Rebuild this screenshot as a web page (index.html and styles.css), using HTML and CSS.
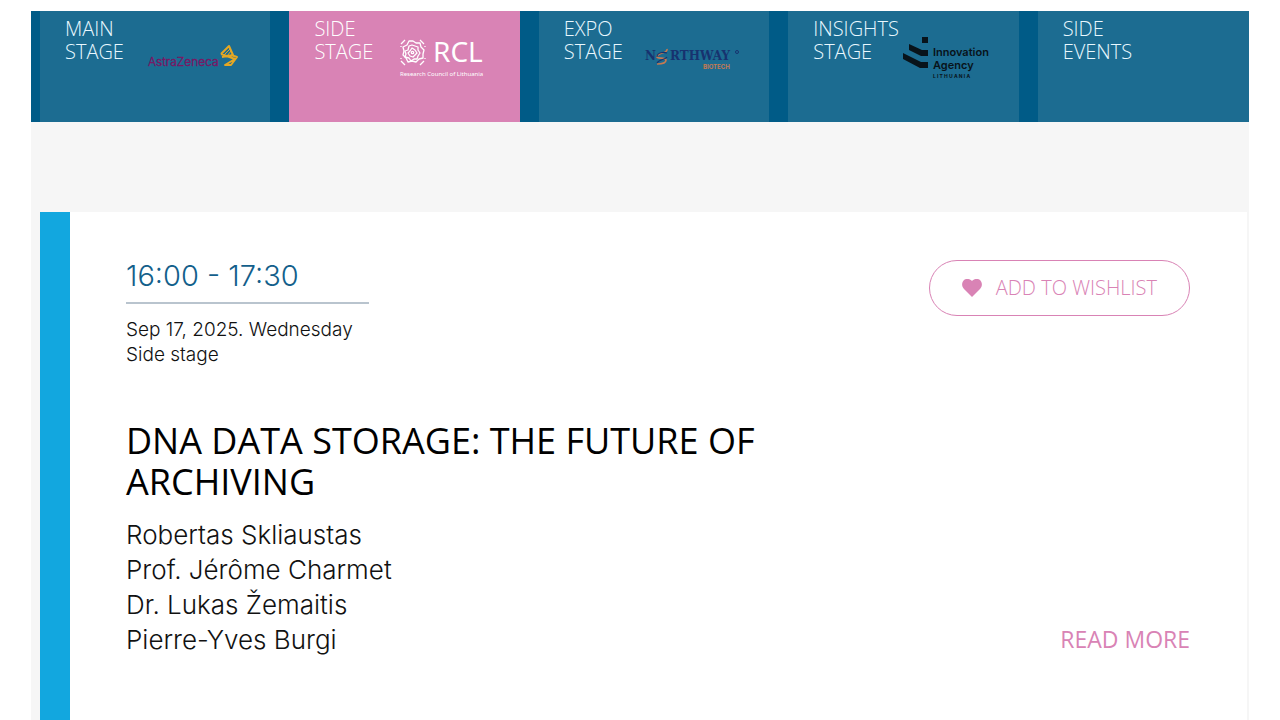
FILE: index.html
```html
<!DOCTYPE html>
<html lang="en">
<head>
<meta charset="utf-8">
<meta name="viewport" content="width=device-width, initial-scale=1">
<title>Programme – Side stage</title>
<link rel="stylesheet" href="styles.css">
</head>
<body>
<div class="page">
  <nav class="stages" aria-label="Stages">
    <a class="stage" href="#main"><span class="stage-name">Main<br>stage</span>
      <svg class="logo logo-az" width="92" height="26" viewBox="0 0 92 26" role="img" aria-label="AstraZeneca">
        <text x="0" y="22" font-size="12" fill="#7a1764" stroke="#7a1764" stroke-width=".4">AstraZeneca</text>
        <path d="M73 10 81 2l4 9-11 2M73 10l14 5-10 6h6l6-8-6-2" fill="none" stroke="#e5a823" stroke-width="2" stroke-linejoin="round"/>
        <path d="m76 11 6-6m-3 7 4-5" stroke="#e5a823" stroke-width="1"/>
      </svg>
    </a>
    <a class="stage stage-active" href="#side" aria-current="page"><span class="stage-name">Side<br>stage</span>
      <svg class="logo logo-rcl" width="90" height="42" viewBox="0 0 90 42" role="img" aria-label="Research Council of Lithuania">
        <g fill="none" stroke="#fff" stroke-width="1.3" stroke-linejoin="round">
          <path d="m13 2 3 2 4 0 1 4 3 3-1 4 0 4-4 1-3 3-4-1-4 1-2-4-3-3 1-4-1-4 4-2 2-4z"/>
          <path d="m12 6 3 1 3 1 0 3 2 3-2 3-1 3-3 0-3 2-2-3-4-1 1-3-1-3 3-1 1-4z"/>
          <path d="m12 9 3 2 2 3-2 2-2 2-3-1-2-3 2-2z"/><circle cx="12.5" cy="13.5" r="1.2"/>
          <path d="m1 5 4-4M20 1l4 4M1 22l4 4M20 26l4-4M1 8V7m24 1V7M1 20v-1m24 1v-1"/>
        </g>
        <text class="rcl-name" x="33" y="23" font-size="28" fill="#fff">RCL</text>
        <text class="rcl-caption" x="0" y="37" font-size="6" fill="#fff">Research Council of Lithuania</text>
      </svg>
    </a>
    <a class="stage" href="#expo"><span class="stage-name">Expo<br>stage</span>
      <svg class="logo logo-north" width="98" height="24" viewBox="0 0 98 24" role="img" aria-label="Northway Biotech">
        <g class="serif" font-size="12" font-weight="700" fill="#17326f"><text x="0" y="12">N</text><text x="25" y="12">RTHWAY</text></g>
        <circle cx="92" cy="4" r="1.5" fill="none" stroke="#17326f"/>
        <path d="M22 1c1 5-10 3-10 8 0 2 9 0 9 3 0 3-5 4-9 4" fill="none" stroke="#c77a51" stroke-width="1.7"/>
        <path d="M12 9c0-5 7-5 10-4M12 15c2-4 8-3 10-6" fill="none" stroke="#17326f" stroke-width="1.2"/>
        <text x="58" y="21" font-size="6" font-weight="700" fill="#c77a51">BIOTECH</text>
      </svg>
    </a>
    <a class="stage" href="#insights"><span class="stage-name">Insights<br>stage</span>
      <svg class="logo logo-agency" width="92" height="44" viewBox="0 0 92 44" role="img" aria-label="Innovation Agency Lithuania">
        <path d="M19 1h6v6h-6zM6 8l13 6h6v6h-7L6 14zM0 17l18 9h7v6h-8L0 23z" fill="#08131a"/>
        <g fill="#08131a" font-weight="600"><text x="30" y="20" font-size="11">Innovation</text><text x="30" y="33" font-size="11">Agency</text><text x="30" y="42" font-size="5" font-weight="700">L I T H U A N I A</text></g>
      </svg>
    </a>
    <a class="stage" href="#events"><span class="stage-name">Side<br>events</span></a>
  </nav>

  <main class="programme">
    <article class="session">
      <header class="session-head">
        <div class="when">
          <p class="time">16:00 - 17:30</p>
          <p class="place">Sep 17, 2025. Wednesday<br>Side stage</p>
        </div>
        <button class="wishlist" type="button">
          <svg width="20" height="18" viewBox="0 0 20 18" aria-hidden="true"><path d="M10 18 2 10C-1 7 0 3 2 1c3-2 6-1 8 1 2-2 5-3 8-1 2 2 3 6 0 9z" fill="#d983b5"/></svg>
          <span>Add to wishlist</span>
        </button>
      </header>
      <h1 class="title">DNA data storage: the future of archiving</h1>
      <div class="session-foot">
        <ul class="speakers">
          <li>Robertas Skliaustas</li>
          <li>Prof. Jérôme Charmet</li>
          <li>Dr. Lukas Žemaitis</li>
          <li>Pierre-Yves Burgi</li>
        </ul>
        <a class="more" href="#session">Read more</a>
      </div>
    </article>
  </main>
</div>
</body>
</html>
```
FILE: styles.css
```css
* { box-sizing: border-box; }
body {
  margin: 0;
  background: #fff;
  color: #111;
  font-family: Inter, "Liberation Sans", sans-serif;
  font-weight: 300;
}
.page {
  display: flex;
  flex-direction: column;
  min-height: 100vh;
  padding: 11px 31px 0;
}
.stages {
  display: grid;
  grid-template-columns: repeat(4, 230fr) 211fr;
  gap: 19px;
  padding-left: 9px;
  background: #005b87;
}
.stage {
  display: flex;
  align-items: flex-start;
  min-height: 111px;
  padding: 6px 0 0 25px;
  background: #1c6c91;
  color: #e9f8ff;
  text-decoration: none;
}
.stage-active { background: #d983b5; color: #fff; }
.stage-name {
  font: 300 20px/23px "Open Sans", sans-serif;
  text-transform: uppercase;
}
.logo { flex: none; overflow: visible; font-family: Inter, sans-serif; }
.logo-az { margin: 27px 0 0 24px; }
.logo-rcl { margin: 22px 0 0 27px; }
.logo-north { margin: 31px 0 0 22px; }
.logo-agency { margin: 19px 0 0 4px; }
.rcl-name,
.rcl-caption { font-family: "Noto Sans", sans-serif; font-weight: 400; }
.serif { font-family: "DejaVu Serif", serif; }
.programme {
  display: flex;
  flex: 1;
  padding: 90px 2px 0 9px;
  background: #f6f6f6;
}
.session {
  flex: 1;
  padding: 48px 57px 60px 56px;
  border-left: 30px solid #12a7df;
  background: #fff;
}
.session-head {
  display: flex;
  justify-content: space-between;
  align-items: flex-start;
}
.when { width: 243px; }
.time {
  margin: 0 0 13px;
  padding-bottom: 11px;
  border-bottom: 2px solid #b9c4ce;
  color: #135f8b;
  font-size: 29px;
  line-height: 31px;
}
.place {
  margin: 0;
  font-size: 19px;
  line-height: 25px;
}
.wishlist {
  display: flex;
  align-items: center;
  gap: 14px;
  height: 56px;
  padding: 0 32px;
  border: 1px solid #d983b5;
  border-radius: 28px;
  background: #fff;
  color: #d983b5;
  font: 300 20px/28px "Open Sans", sans-serif;
  text-transform: uppercase;
}
.title {
  max-width: 660px;
  margin: 53px 0 15px;
  color: #000;
  font: 400 36px/41px "Open Sans", sans-serif;
  text-transform: uppercase;
}
.session-foot {
  display: flex;
  justify-content: space-between;
  align-items: flex-end;
}
.speakers {
  margin: 0;
  padding: 0;
  list-style: none;
  font-size: 26px;
  line-height: 35px;
}
.more {
  color: #d983b5;
  font: 400 23px/35px "Open Sans", sans-serif;
  text-decoration: none;
  text-transform: uppercase;
}
```
